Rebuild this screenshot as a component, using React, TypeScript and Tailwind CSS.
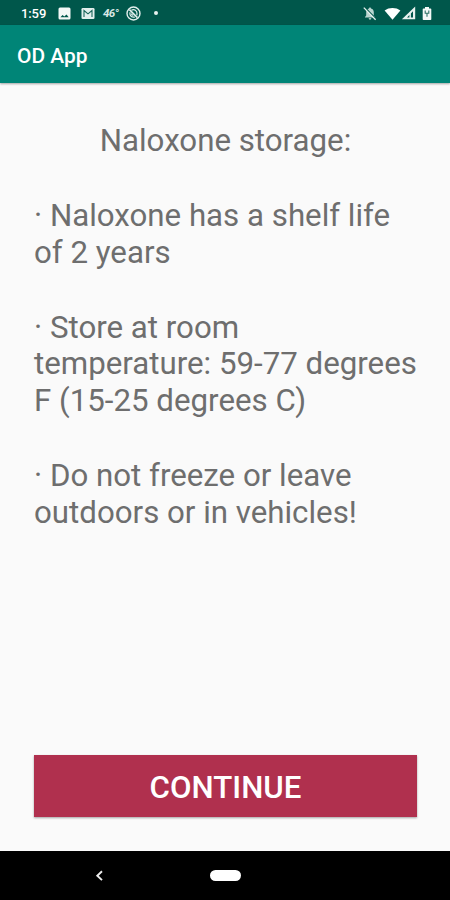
const notes = [
  ['· Naloxone has a shelf life', 'of 2 years'],
  ['· Store at room', 'temperature: 59-77 degrees', 'F (15-25 degrees C)'],
  ['· Do not freeze or leave', 'outdoors or in vehicles!'],
];

function StatusBar() {
  return (
    <div className="flex h-[25px] shrink-0 items-center bg-[#00574b] pt-px pl-[21px] pr-[18px] text-white">
      <span className="w-[26px] whitespace-nowrap text-[13px] leading-none font-medium tracking-[-0.1px]">1:59</span>
      {/* Screenshot saved */}
      <svg className="ml-[11px] h-[13px] w-[13px]" viewBox="0 0 13 13">
        <rect x="0.5" y="0.5" width="12" height="12" rx="1.5" fill="#f3f8f7" />
        <path d="M2.4 10.3 4.6 8l1.7 1.4 2.2-2 2.2 2.9z" fill="#00574b" />
      </svg>
      {/* Mail */}
      <svg className="ml-[10px] h-[13px] w-[14px]" viewBox="0 0 14 13">
        <rect x="0.5" y="1" width="13" height="11" rx="1.3" fill="#e3efed" />
        <path d="M3 10V3.5L7 6.8l4-3.3V10" fill="none" stroke="#1c665b" strokeWidth="1.1" />
      </svg>
      <span className="ml-[8px] w-[17px] whitespace-nowrap pt-px text-[11.5px] leading-none font-bold tracking-[-0.6px] text-[#d9e8e5] italic">46°</span>
      {/* Do not disturb */}
      <svg className="ml-[6px] h-[15px] w-[15px]" viewBox="0 0 15 15" fill="none" stroke="#e3efed">
        <circle cx="7.5" cy="7.5" r="6.5" strokeWidth="1.4" />
        <path d="M3.4 3.6 11.4 11.6" strokeWidth="1.5" />
        <path d="M5.4 4.2c2.9-1.4 5.8.4 5.6 3.6 0 .6-.1 1-.3 1.5M4.1 6.2c-.8 2.6.7 5 3.4 5h1.3M5.4 7.6c.1 1 .8 1.6 1.9 1.7" strokeWidth="1.2" />
      </svg>
      <span className="ml-[13px] h-1 w-1 rounded-full bg-[#e8f2f0]" />

      {/* Notifications muted */}
      <svg className="ml-auto h-[15px] w-[14px]" viewBox="0 0 14 15">
        <path d="M7 1.5c.7 0 1 .5 1 1.1 1.8.4 2.8 1.8 2.8 3.7v3.3l1.2 1.3v.6H2v-.6l1.2-1.3V6.3c0-1.9 1-3.3 2.8-3.7 0-.6.3-1.1 1-1.1z" fill="#b9d5d0" />
        <path d="M5.7 12.2h2.6c0 1.7-2.6 1.7-2.6 0z" fill="#d5e6e3" />
        <path d="M1.8 1.6 13.4 13.2" stroke="#00574b" strokeWidth="1.5" />
        <path d="M.8 1.6 12.6 13.7" stroke="#e8f2f0" strokeWidth="1.3" />
      </svg>
      <svg className="ml-[7px] h-[13px] w-[17px]" viewBox="0 0 17 13">
        <path d="M.6 3.4C5 .1 12 .1 16.4 3.4L8.5 12.8z" fill="#fff" />
      </svg>
      <svg className="h-[14px] w-[15px]" viewBox="0 0 15 14">
        <path d="M14.2.6v12.6H.9z" fill="#e8f2f0" />
        <path d="M12 5.3v6.1H9.9V7.5zM8.4 9v2.4H6z" fill="#00574b" />
      </svg>
      <svg className="ml-[6px] h-[15px] w-[10px]" viewBox="0 0 10 15">
        <path d="M3 1h4v1.4h1.5c.5 0 .8.3.8.8v10c0 .5-.3.8-.8.8h-7c-.5 0-.8-.3-.8-.8v-10c0-.5.3-.8.8-.8H3z" fill="#f3f8f7" />
        <path d="M3.2 4.6v2.6h3.6V4.6M5 7v3.8" fill="none" stroke="#2f7268" strokeWidth="1.1" />
      </svg>
    </div>
  );
}

function NavigationBar() {
  return (
    <div className="flex h-[49px] shrink-0 items-center bg-black pl-[95px]">
      <svg className="h-[12px] w-[8px]" viewBox="0 0 8 12" fill="none">
        <path d="M7 1.3 2.3 5.7 7 10.1" stroke="#ededed" strokeWidth="1.9" />
      </svg>
      <span className="ml-[107px] h-[11px] w-[31px] rounded-full bg-white" />
    </div>
  );
}

export default function App() {
  return (
    <div className="flex h-[900px] w-[450px] flex-col overflow-hidden bg-[#fafafa] font-['Roboto',sans-serif]">
      <StatusBar />
      <header className="flex h-[58px] shrink-0 items-center bg-[#008577] pl-[17px] shadow-[0_1px_2px_rgba(0,0,0,0.35)]">
        <h1 className="pt-[4px] text-[20.9px] leading-none font-medium text-white">OD App</h1>
      </header>

      <main className="flex min-h-0 flex-1 flex-col px-[34px] pt-[40px] pb-[34px] text-[31.25px] leading-[36.5px] text-[#6e6e6e]">
        <h2 className="pl-px text-center">Naloxone storage:</h2>
        <div className="mt-[38.5px] flex flex-col gap-[38.8px]">
          {notes.map((lines) => (
            <p key={lines[0]}>
              {lines.map((line) => (
                <span key={line} className="block whitespace-nowrap">{line}</span>
              ))}
            </p>
          ))}
        </div>
        <button className="mt-auto flex h-[62px] w-[383px] shrink-0 items-center justify-center bg-[#b0304e] pt-[3px] text-[31.25px] leading-none font-medium text-white shadow-[0_1px_2px_rgba(0,0,0,0.35)]">
          CONTINUE
        </button>
      </main>

      <NavigationBar />
    </div>
  );
}
